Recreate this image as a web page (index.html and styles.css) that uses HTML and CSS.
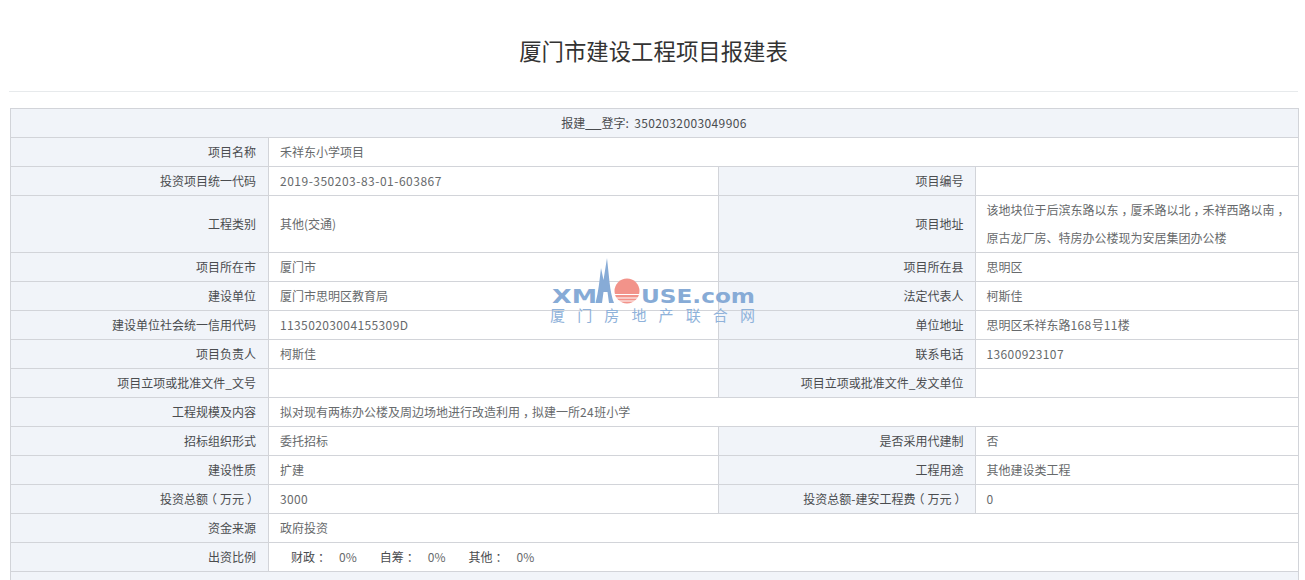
FILE: index.html
```html
<!DOCTYPE html>
<html lang="zh-CN">
<head>
<meta charset="utf-8">
<title>厦门市建设工程项目报建表</title>
<link rel="stylesheet" href="styles.css">
</head>
<body>
<main class="page">
<h1 class="title">厦门市建设工程项目报建表</h1>
<div class="sheet">
<table class="form">
<colgroup><col class="c1"><col class="c2"><col class="c3"><col class="c4"></colgroup>
<tbody>
<tr><th colspan="4" class="head">报建<u>&nbsp;&nbsp;&nbsp;&nbsp;&nbsp;&nbsp;</u>登字:&nbsp; <span class="num">3502032003049906</span></th></tr>
<tr><th>项目名称</th><td colspan="3">禾祥东小学项目</td></tr>
<tr><th>投资项目统一代码</th><td><span class="code">2019-350203-83-01-603867</span></td><th>项目编号</th><td></td></tr>
<tr class="tall"><th>工程类别</th><td>其他(交通)</td><th>项目地址</th><td class="multi">该地块位于后滨东路以东<span class="p">，</span>厦禾路以北<span class="p">，</span>禾祥西路以南<span class="p">，</span>原古龙厂房、特房办公楼现为安居集团办公楼</td></tr>
<tr><th>项目所在市</th><td>厦门市</td><th>项目所在县</th><td>思明区</td></tr>
<tr><th>建设单位</th><td>厦门市思明区教育局</td><th>法定代表人</th><td>柯斯佳</td></tr>
<tr><th>建设单位社会统一信用代码</th><td><span class="num">11350203004155309D</span></td><th>单位地址</th><td>思明区禾祥东路<span class="num">168</span>号<span class="num">11</span>楼</td></tr>
<tr><th>项目负责人</th><td>柯斯佳</td><th>联系电话</th><td><span class="num">13600923107</span></td></tr>
<tr><th>项目立项或批准文件_文号</th><td></td><th>项目立项或批准文件_发文单位</th><td></td></tr>
<tr><th>工程规模及内容</th><td colspan="3">拟对现有两栋办公楼及周边场地进行改造利用<span class="p">，</span>拟建一所<span class="num">24</span>班小学</td></tr>
<tr><th>招标组织形式</th><td>委托招标</td><th>是否采用代建制</th><td>否</td></tr>
<tr><th>建设性质</th><td>扩建</td><th>工程用途</th><td>其他建设类工程</td></tr>
<tr><th>投资总额<span class="p">（</span>万元<span class="p">）</span></th><td><span class="num">3000</span></td><th>投资总额-建安工程费<span class="p">（</span>万元<span class="p">）</span></th><td><span class="num">0</span></td></tr>
<tr><th>资金来源</th><td colspan="3">政府投资</td></tr>
<tr><th>出资比例</th><td colspan="3"><div class="ratio"><span><b>财政<span class="p">：</span></b>0%</span><span><b>自筹<span class="p">：</span></b>0%</span><span><b>其他<span class="p">：</span></b>0%</span></div></td></tr>
<tr><th colspan="4" class="head"></th></tr>
</tbody>
</table>
<div class="mark" aria-label="XMHOUSE.com 厦门房地产联合网">
<svg class="mark-logo" width="206" height="49" viewBox="0 0 206 49">
<path d="M46.5 45C49.5 34 50.5 22 52 10L54.5 22L58 0L60.5 24C61.5 33 63 40 65 45L60 45L58.5 34L54.5 34L53 45Z" fill="#87abd6"/>
<circle cx="78" cy="33" r="12.5" fill="#f2938a"/>
<path d="M65 36.5H91M65 40H91M65 43H91" stroke="#fff" stroke-width="1"/>
<text x="3" y="45" class="mark-a" textLength="45" lengthAdjust="spacingAndGlyphs">XM</text>
<text x="92" y="45" class="mark-a" textLength="114" lengthAdjust="spacingAndGlyphs">USE.com</text>
</svg>
<div class="mark-cn"><span>厦</span><span>门</span><span>房</span><span>地</span><span>产</span><span>联</span><span>合</span><span>网</span></div>
</div>
</div>
</main>
</body>
</html>
```
FILE: styles.css
```css
* { box-sizing: border-box; }
html, body { margin: 0; height: 580px; overflow: hidden; background: #fff; }
body { font-family: "Noto Sans CJK SC", "Open Sans", sans-serif; font-size: 12px; color: #676a6c; }
.page { padding: 0 7px 0 9px; }
.title {
  margin: 0 0 16px;
  height: 92px;
  padding-top: 34px;
  border-bottom: 1px solid #e7eaec;
  text-align: center;
  font-size: 22.4px;
  line-height: 32px;
  font-weight: 400;
  color: #333;
}
.sheet { position: relative; margin-left: 1px; }
.form { width: 1288px; table-layout: fixed; border-collapse: collapse; }
.c1 { width: 258px; }
.c2 { width: 450px; }
.c3 { width: 257px; }
.c4 { width: 323px; }
th, td { height: 29px; padding: 0 12px 0 11px; border: 1px solid #d2d4d9; line-height: 18px; font-size: 12px; font-weight: 400; }
th { background: #f1f4f9; text-align: right; color: #4a4c4f; }
td { text-align: left; background: #fff; }
th + td + th { padding-right: 11.5px; }
th + td + th + td { padding-left: 10.5px; }
th.head { text-align: center; }
.tall th, .tall td { height: 57px; }
td.multi { line-height: 28px; padding-right: 6px; }
.num { letter-spacing: .38px; }
.code { letter-spacing: .5px; }
.p { font-feature-settings: "halt"; padding: 0 3px; }
.ratio { display: flex; gap: 23px; padding-left: 11px; }
.ratio b { font-weight: 400; color: #4a4c4f; margin-right: 12px; }
.mark { position: absolute; left: 539px; top: 150px; width: 206px; pointer-events: none; }
.mark-logo { display: block; }
.mark-a { font-family: "DejaVu Sans", sans-serif; font-weight: 700; font-size: 20px; fill: #87abd6; }
.mark-cn { display: flex; justify-content: space-between; padding: 0 0 0 1px; font-size: 15px; line-height: 16px; color: #8fb2da; }
```
